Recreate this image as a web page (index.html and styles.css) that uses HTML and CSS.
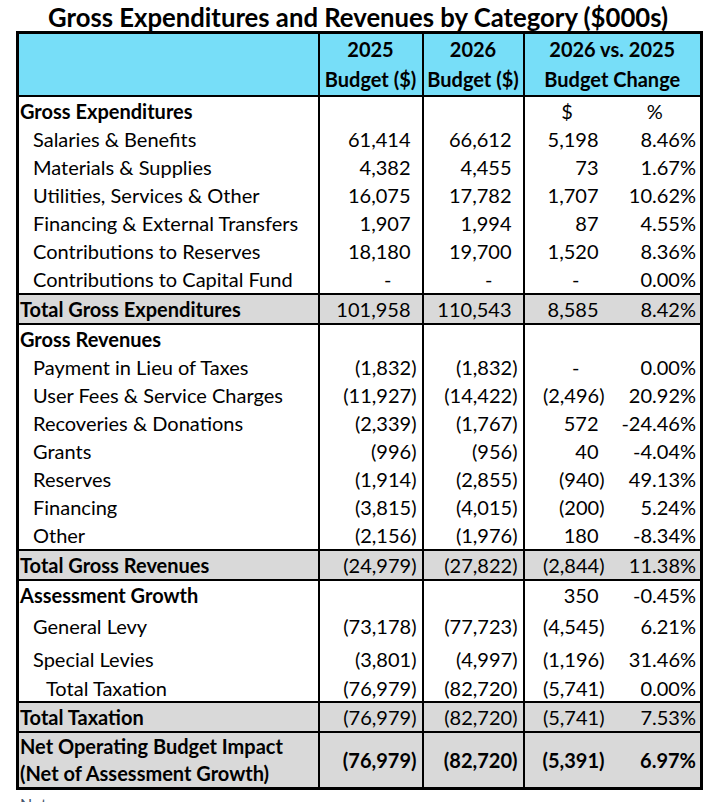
FILE: index.html
```html
<!DOCTYPE html>
<html lang="en">
<head>
    <meta charset="UTF-8">
    <title>Gross Expenditures and Revenues by Category</title>
    <link rel="stylesheet" href="styles.css">
</head>
<body>
    <div class="sheet">
        <h1>Gross Expenditures and Revenues by Category ($000s)</h1>

        <table class="budget">
            <colgroup>
                <col class="c-label">
                <col class="c-num">
                <col class="c-num2">
                <col class="c-chg">
                <col class="c-pct">
            </colgroup>
            <thead>
                <tr>
                    <th></th>
                    <th>2025<br>Budget ($)</th>
                    <th>2026<br>Budget ($)</th>
                    <th colspan="2">2026 vs. 2025<br>Budget Change</th>
                </tr>
            </thead>
            <tbody>
                <tr class="section">
                    <td class="head">Gross Expenditures</td>
                    <td></td><td></td>
                    <td class="center">$</td><td class="center">%</td>
                </tr>
                <tr class="plain"><td class="ind">Salaries &amp; Benefits</td><td>61,414</td><td>66,612</td><td>5,198</td><td>8.46%</td></tr>
                <tr class="plain"><td class="ind">Materials &amp; Supplies</td><td>4,382</td><td>4,455</td><td>73</td><td>1.67%</td></tr>
                <tr class="plain"><td class="ind">Utilities, Services &amp; Other</td><td>16,075</td><td>17,782</td><td>1,707</td><td>10.62%</td></tr>
                <tr class="plain"><td class="ind">Financing &amp; External Transfers</td><td>1,907</td><td>1,994</td><td>87</td><td>4.55%</td></tr>
                <tr class="plain"><td class="ind">Contributions to Reserves</td><td>18,180</td><td>19,700</td><td>1,520</td><td>8.36%</td></tr>
                <tr><td class="ind">Contributions to Capital Fund</td><td class="dash">-</td><td class="dash">-</td><td class="dash">-</td><td>0.00%</td></tr>

                <tr class="total plain">
                    <td class="head">Total Gross Expenditures</td>
                    <td>101,958</td><td>110,543</td><td>8,585</td><td>8.42%</td>
                </tr>

                <tr class="section"><td class="head">Gross Revenues</td><td></td><td></td><td></td><td></td></tr>
                <tr><td class="ind">Payment in Lieu of Taxes</td><td>(1,832)</td><td>(1,832)</td><td class="dash">-</td><td>0.00%</td></tr>
                <tr><td class="ind">User Fees &amp; Service Charges</td><td>(11,927)</td><td>(14,422)</td><td>(2,496)</td><td>20.92%</td></tr>
                <tr><td class="ind">Recoveries &amp; Donations</td><td>(2,339)</td><td>(1,767)</td><td class="pos">572</td><td>-24.46%</td></tr>
                <tr><td class="ind">Grants</td><td>(996)</td><td>(956)</td><td class="pos">40</td><td>-4.04%</td></tr>
                <tr><td class="ind">Reserves</td><td>(1,914)</td><td>(2,855)</td><td>(940)</td><td>49.13%</td></tr>
                <tr><td class="ind">Financing</td><td>(3,815)</td><td>(4,015)</td><td>(200)</td><td>5.24%</td></tr>
                <tr><td class="ind">Other</td><td>(2,156)</td><td>(1,976)</td><td class="pos">180</td><td>-8.34%</td></tr>

                <tr class="total">
                    <td class="head">Total Gross Revenues</td>
                    <td>(24,979)</td><td>(27,822)</td><td>(2,844)</td><td>11.38%</td>
                </tr>

                <tr class="section"><td class="head">Assessment Growth</td><td></td><td></td><td class="pos">350</td><td>-0.45%</td></tr>
                <tr class="tall"><td class="ind">General Levy</td><td>(73,178)</td><td>(77,723)</td><td>(4,545)</td><td>6.21%</td></tr>
                <tr class="mid"><td class="ind">Special Levies</td><td>(3,801)</td><td>(4,997)</td><td>(1,196)</td><td>31.46%</td></tr>
                <tr class="short"><td class="ind2">Total Taxation</td><td>(76,979)</td><td>(82,720)</td><td>(5,741)</td><td>0.00%</td></tr>

                <tr class="total">
                    <td class="head">Total Taxation</td>
                    <td>(76,979)</td><td>(82,720)</td><td>(5,741)</td><td>7.53%</td>
                </tr>
                <tr class="total net">
                    <td class="head">Net Operating Budget Impact<br>(Net of Assessment Growth)</td>
                    <td>(76,979)</td><td>(82,720)</td><td>(5,391)</td><td>6.97%</td>
                </tr>
            </tbody>
        </table>

        <p class="note">Note:</p>
    </div>
</body>
</html>
```

FILE: styles.css
```css
body {
    margin: 0;
    background: #ffffff;
    color: #000000;
    font-family: Lato, "Open Sans", sans-serif;
    overflow: hidden;
}

.sheet {
    width: 684px;
    padding-left: 16px;
}

h1 {
    margin: 0;
    height: 31px;
    font-size: 25.7px;
    font-weight: 700;
    line-height: 34px;
    text-align: center;
    white-space: nowrap;
}

.budget {
    width: 684px;
    border-collapse: collapse;
    table-layout: fixed;
    border: 3px solid #000000;
    font-size: 20px;
}

.c-label { width: 301px; }
.c-num { width: 104px; }
.c-num2 { width: 101px; }
.c-chg { width: 86px; }
.c-pct { width: 92px; }

.budget th {
    background: #77def8;
    font-weight: 700;
    line-height: 30px;
    padding: 0 0 1px;
    text-align: center;
    border-left: 2px solid #000000;
    border-bottom: 2px solid #000000;
    white-space: nowrap;
}

/* numbers in brackets sit 5px from the rule, plain ones leave room for the bracket */
.budget td {
    height: 28px;
    padding: 0 5px 0 0;
    text-align: right;
    white-space: nowrap;
    border-left: 2px solid #000000;
    line-height: 22px;
}

.plain td,
.budget td.pos {
    padding-right: 11px;
}

/* the $ and % columns share one block, no rule between them */
.budget td:nth-child(5),
.plain td:nth-child(5) {
    border-left: none;
    padding-right: 4px;
}

.budget td:first-child {
    text-align: left;
    padding: 0 0 0 1px;
}

.budget td.head {
    font-weight: 700;
}

.budget td.ind {
    padding-left: 14px;
}

.budget td.ind2 {
    padding-left: 27px;
}

.budget td.center {
    text-align: center;
    padding-right: 0;
}

.budget td.dash {
    padding-right: 30px;
}

.total td {
    background: #d9d9d9;
    border-top: 2px solid #000000;
    border-bottom: 2px solid #000000;
}

.net td {
    height: 54px;
    font-weight: 700;
    line-height: 27px;
}

.tall td { height: 34px; }
.mid td { height: 31px; }
.short td { height: 27px; }

.note {
    margin: 4px 0 0 4px;
    font-size: 16px;
    color: #44546a;
}
```
